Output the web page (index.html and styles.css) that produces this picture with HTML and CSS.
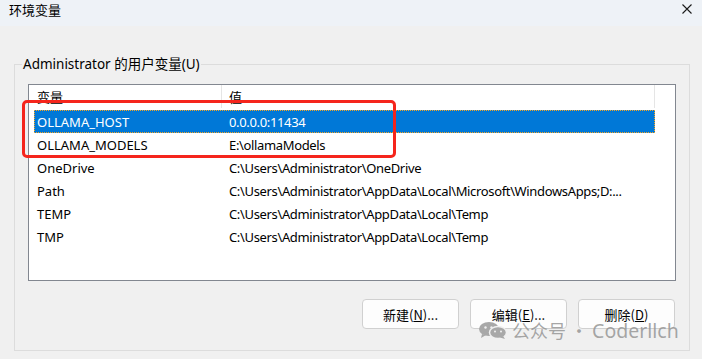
FILE: index.html
```html
<!DOCTYPE html>
<html lang="zh-CN">
<head>
  <meta charset="UTF-8">
  <title>环境变量</title>
  <link rel="stylesheet" href="styles.css">
</head>
<body>

  <div class="titlebar">
    <span class="title">环境变量</span>
    <svg class="close" width="10" height="10" viewBox="0 0 10 10">
      <path d="M0.5 0.5 L9.5 9.5 M9.5 0.5 L0.5 9.5" stroke="#1a1a1a" stroke-width="1.1" fill="none"/>
    </svg>
  </div>

  <div class="content">
    <fieldset class="group">
      <legend>Administrator 的用户变量(U)</legend>

      <div class="listbox">
        <div class="row head">
          <div class="c1 sep">变量</div>
          <div class="c2">值</div>
        </div>
        <div class="row selected">
          <div class="c1">OLLAMA_HOST</div>
          <div class="c2">0.0.0.0:11434</div>
        </div>
        <div class="row">
          <div class="c1">OLLAMA_MODELS</div>
          <div class="c2">E:\ollamaModels</div>
        </div>
        <div class="row">
          <div class="c1">OneDrive</div>
          <div class="c2">C:\Users\Administrator\OneDrive</div>
        </div>
        <div class="row">
          <div class="c1">Path</div>
          <div class="c2">C:\Users\Administrator\AppData\Local\Microsoft\WindowsApps;D:...</div>
        </div>
        <div class="row">
          <div class="c1">TEMP</div>
          <div class="c2">C:\Users\Administrator\AppData\Local\Temp</div>
        </div>
        <div class="row">
          <div class="c1">TMP</div>
          <div class="c2">C:\Users\Administrator\AppData\Local\Temp</div>
        </div>
      </div>

      <div class="btn-container">
        <button>新建(<u>N</u>)...</button>
        <button>编辑(<u>E</u>)...</button>
        <button>删除(<u>D</u>)</button>
      </div>
    </fieldset>
  </div>

  <!-- red annotation box drawn over the list -->
  <div class="mark"></div>

  <div class="watermark">
    <svg width="30" height="17" viewBox="0 0 30 17">
      <ellipse cx="11" cy="7" rx="10" ry="7" fill="#a8a8a8"/>
      <path d="M4 12 L3 16 L8 13 Z" fill="#a8a8a8"/>
      <ellipse cx="20" cy="10.5" rx="8.5" ry="6" fill="#a8a8a8" stroke="#f0f0f0" stroke-width="1.5"/>
      <path d="M25 14 L27 17 L22 15.5 Z" fill="#a8a8a8"/>
      <circle cx="7.5" cy="5.5" r="1.2" fill="#f0f0f0"/>
      <circle cx="13.5" cy="5.5" r="1.2" fill="#f0f0f0"/>
      <circle cx="17" cy="9.5" r="1" fill="#f0f0f0"/>
      <circle cx="23" cy="9.5" r="1" fill="#f0f0f0"/>
    </svg>
    <span>公众号 · <span class="wm-name">Coderllch</span></span>
  </div>

</body>
</html>
```

FILE: styles.css
```css
body {
  margin: 0;
  width: 702px;
  height: 359px;
  overflow: hidden;
  position: relative;
  background: #f0f0f0;
  color: #000;
  font-family: "Noto Sans", "Noto Sans CJK SC", sans-serif;
  font-size: 13px;
}

.titlebar {
  height: 26px;
  background: #eef2f7;
  display: flex;
  align-items: flex-start;
  justify-content: space-between;
  padding: 0 10px 0 9px;
}

.title {
  font-family: "Noto Sans CJK SC", sans-serif;
  font-size: 13px;
  line-height: 19px;
}

.close {
  margin-top: 4px;
}

.content {
  padding: 30px 12px 0 14px;
}

.group {
  margin: 0;
  min-width: 0;
  padding: 12px 13px 18px 13px;
  border: 1px solid #dcdcdc;
  height: 295px;
  box-sizing: border-box;
}

.group legend {
  margin-left: -6px;
  padding: 0 1px;
  font-size: 13.5px;
  line-height: 16px;
  font-family: "Noto Sans", "Noto Sans CJK SC", sans-serif;
}

.listbox {
  background: #fff;
  border: 1px solid #828790;
  height: 195px;
  padding: 0 20px 0 5px;
  overflow: hidden;
}

.row {
  display: flex;
  height: 23px;
  align-items: center;
  white-space: nowrap;
  overflow: hidden;
}

.row.head {
  height: 23px;
  margin-bottom: 2px;
  font-family: "Noto Sans CJK SC", sans-serif;
  font-size: 13px;
  border-right: 1px solid #e5e5e5;
}

.c1 {
  flex: none;
  width: 188px;
  padding-left: 3px;
  box-sizing: border-box;
  height: 100%;
  display: flex;
  align-items: center;
}

.c1.sep {
  border-right: 1px solid #e5e5e5;
}

.c2 {
  padding-left: 7px;
  letter-spacing: -0.35px;
}

.row.selected {
  background: #0078d7;
  color: #fff;
  outline: 1px dotted #f5a623;
  outline-offset: -1px;
}

.btn-container {
  display: flex;
  justify-content: flex-end;
  gap: 11px;
  margin-top: 18px;
  padding-right: 1px;
}

button {
  width: 97px;
  height: 30px;
  background: #fdfdfd;
  border: 1px solid #d0d0d0;
  border-radius: 4px;
  font-family: "Noto Sans CJK SC", sans-serif;
  font-size: 13px;
  color: #000;
  padding: 0;
}

.mark {
  position: absolute;
  left: 22px;
  top: 100px;
  width: 374px;
  height: 58px;
  box-sizing: border-box;
  border: 3px solid #f5251c;
  border-radius: 5px;
}

.watermark {
  position: absolute;
  left: 478px;
  top: 318px;
  display: flex;
  align-items: center;
  gap: 4px;
  color: rgba(150, 150, 150, 0.85);
  font-family: "Noto Sans CJK SC", sans-serif;
  font-size: 18px;
  line-height: 24px;
}

.wm-name {
  font-family: "Noto Sans", sans-serif;
  font-size: 19.5px;
}
```
